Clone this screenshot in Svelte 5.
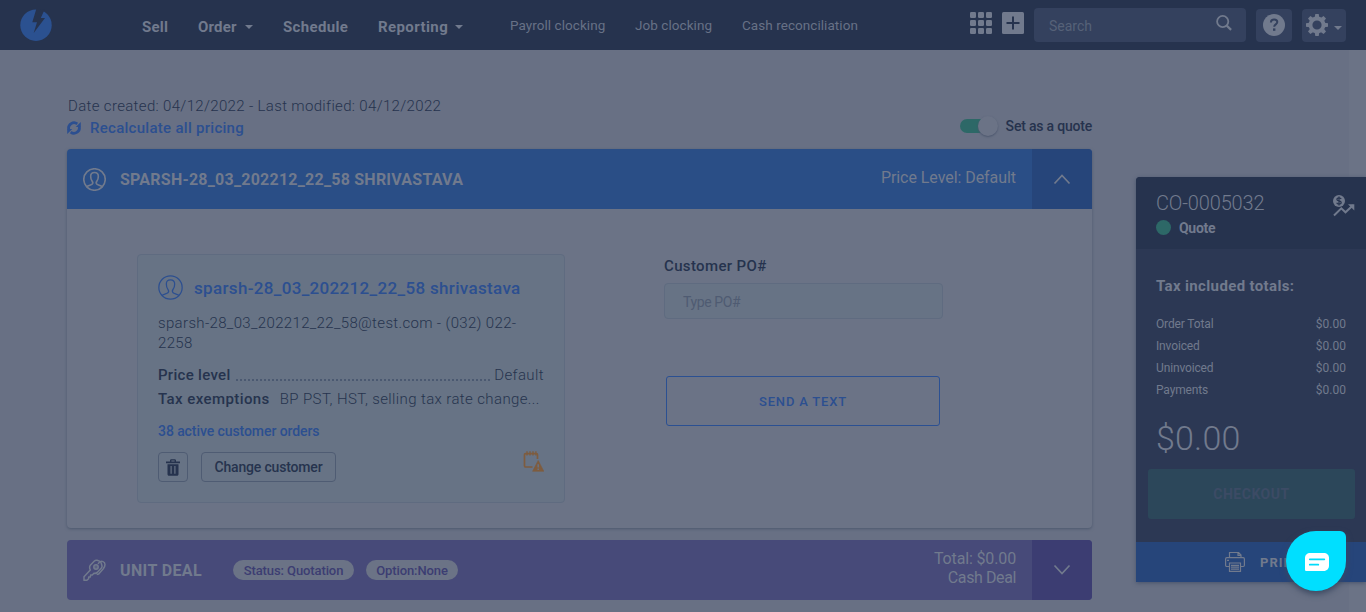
<script>
  const totals = [
    ['Order Total', '$0.00'],
    ['Invoiced', '$0.00'],
    ['Uninvoiced', '$0.00'],
    ['Payments', '$0.00'],
  ];
</script>

{#snippet person(size, stroke)}
  <svg width={size} height={size} viewBox="0 0 24 24" fill="none" stroke="currentColor" stroke-width={stroke}>
    <circle cx="12" cy="12" r="11.2" />
    <path d="M3.800 19.700c1.500-1.500 4.700-1.700 5.700-2.700.9-.9.800-2.300 0-3.300-1-1.200-1.500-2.700-1.500-5C8 6 9.300 4.700 12 4.700s4 1.300 4 4c0 2.300-.5 3.800-1.500 5-.8 1-.9 2.400 0 3.300 1 1 4.200 1.200 5.700 2.700" />
  </svg>
{/snippet}

<div class="page">
  <header>
    <svg class="logo" width="32" height="32" viewBox="20 9 32 32">
      <circle cx="36" cy="25.200" r="15.700" fill="#2b5190" />
      <path d="M36.600 8 32.300 22.300H37L33.700 33 45 18h-4.200l3.600-8z" fill="#26334e" />
    </svg>
    <nav class="primary">
      <span class="sell">Sell</span>
      <span class="order">Order <i class="caret"></i></span>
      <span class="schedule">Schedule</span>
      <span class="reporting">Reporting <i class="caret"></i></span>
    </nav>
    <nav class="secondary">
      <span class="payroll">Payroll clocking</span>
      <span class="job">Job clocking</span>
      <span class="cash">Cash reconciliation</span>
    </nav>
    <div class="tools">
      <svg class="grid" width="22" height="22" viewBox="0 0 22 22" fill="currentColor">
        {#each [0, 8, 16] as y}
          {#each [0, 8, 16] as x}
            <rect {x} {y} width="6" height="6" rx="1.200" />
          {/each}
        {/each}
      </svg>
      <svg class="plus" width="22" height="22" viewBox="0 0 22 22">
        <rect width="22" height="22" rx="1.500" fill="currentColor" />
        <path d="M11 4.500v13M4.500 11h13" stroke="#26334e" stroke-width="2" />
      </svg>
      <div class="search">
        <span>Search</span>
        <svg width="16" height="16" viewBox="0 0 16 16" fill="none" stroke="currentColor">
          <circle cx="6.700" cy="6.500" r="5.600" stroke-width="1.800" />
          <path d="m10.700 10.600 4.400 4.300" stroke-width="2.200" />
        </svg>
      </div>
      <div class="tool help">
        <svg width="22" height="22" viewBox="0 0 22 22">
          <circle cx="11" cy="11" r="11" fill="currentColor" />
          <path d="M7.900 8.500c0-2 1.300-3.100 3.200-3.100s3.200 1 3.200 2.700c0 2.300-3.100 2.300-3.100 4.700" fill="none" stroke="#34415e" stroke-width="2" />
          <rect x="10" y="14.400" width="2.400" height="2.400" fill="#34415e" />
        </svg>
      </div>
      <div class="tool gear">
        <svg width="22" height="22" viewBox="-11 -11 22 22">
          <g fill="currentColor">
            {#each [0, 45, 90, 135, 180, 225, 270, 315] as angle}
              <path d="M-2.300-7.500-1.700-11H1.700L2.300-7.500z" transform="rotate({angle})" />
            {/each}
          </g>
          <circle r="6.500" fill="none" stroke="currentColor" stroke-width="3.800" />
        </svg>
        <i class="caret"></i>
      </div>
    </div>
  </header>

  <div class="content">
    <main>
      <div class="meta">
        <div>
          <p class="dates">Date created: 04/12/2022 - Last modified: 04/12/2022</p>
          <p class="recalc">
            <svg width="14" height="14" viewBox="0 0 14 14" fill="none" stroke="currentColor" stroke-width="2.800">
              <path d="M1.700 8.200a5.400 5.400 0 0 1 8.600-5.300M12.300 5.800a5.400 5.400 0 0 1-8.600 5.300" />
              <path d="M13.800 1v5H8.800zM.2 13V8h5z" fill="currentColor" stroke="none" />
            </svg>
            <span>Recalculate all pricing</span>
          </p>
        </div>
        <div class="quote-toggle">
          <span class="switch"><b></b></span>
          <span class="toggle-label">Set as a quote</span>
        </div>
      </div>

      <section class="card">
        <div class="bar blue">
          <span class="bar-icon">{@render person(23, 1.7)}</span>
          <h2 class="customer-title">SPARSH-28_03_202212_22_58 SHRIVASTAVA</h2>
          <div class="summary level">Price Level: Default</div>
          <div class="expander">
            <svg width="18" height="12" viewBox="0 0 18 12" fill="none" stroke="currentColor" stroke-width="1.700"><path d="m1.500 10.500 7.500-8 7.500 8" /></svg>
          </div>
        </div>
        <div class="card-body">
          <div class="customer">
            <div class="name">
              {@render person(25, 1.2)}
              <span>sparsh-28_03_202212_22_58 shrivastava</span>
            </div>
            <p class="contact"><span>sparsh-28_03_202212_22_58@test.com - (032) 022-</span><br /><span>2258</span></p>
            <div class="row">
              <b class="pl">Price level</b><span class="dots"></span><span class="default">Default</span>
            </div>
            <div class="row tax">
              <b class="te">Tax exemptions</b><span class="tax-list">BP PST, HST, selling tax rate change...</span>
            </div>
            <div class="orders">38 active customer orders</div>
            <div class="actions">
              <div class="btn trash">
                <svg width="14" height="17" viewBox="0 0 14 17" fill="currentColor">
                  <path d="M4 2.500V1.800C4 .8 4.500.3 5.400.3h3.200c.9 0 1.400.5 1.400 1.500v.7h4v1.700H0V2.500zm1.400 0h3.200v-1H5.400z" />
                  <path fill-rule="evenodd" d="M1.500 5.200h11v10c0 .9-.6 1.500-1.500 1.500H3c-.9 0-1.500-.6-1.500-1.500zM4.500 7v7.800h1.200V7zm3.800 0v7.800h1.200V7z" />
                </svg>
              </div>
              <div class="btn change"><span>Change customer</span></div>
              <svg class="warn" width="21" height="21" viewBox="0 0 21 21" fill="none" stroke="currentColor">
                <path d="M9.500 16H2.700C1.900 16 1.500 15.600 1.500 14.800V3.800c0-.8.4-1.200 1.200-1.200h10.600c.8 0 1.200.4 1.200 1.200V8" stroke-width="1.700" />
                <path d="M4 .2v4.300M7 .2v4.300M10 .2v4.300M12.900.2v4.300" stroke-width="1.400" />
                <path d="M15.200 9.500 20.800 20.300H9.600z" fill="currentColor" stroke="currentColor" stroke-width=".6" stroke-linejoin="round" />
                <path d="M15.200 13.300v3.200M15.200 17.400v1.500" stroke="#677385" stroke-width="1.500" />
              </svg>
            </div>
          </div>
          <div class="po">
            <div class="po-label">Customer PO#</div>
            <div class="input"><span>Type PO#</span></div>
            <div class="send"><span>SEND A TEXT</span></div>
          </div>
        </div>
      </section>

      <section class="card unit">
        <div class="bar purple">
          <span class="bar-icon">
            <svg width="23" height="22" viewBox="0 0 23 22" fill="none" stroke="currentColor" stroke-width="1.500" stroke-linejoin="round">
              <path d="M7.300 6.300 11.400 2c.8-.8 1.700-1 2.700-.7l2.400.8c.8.300 1.400.9 1.600 1.700l.8 2.700c.3 1 .1 1.900-.7 2.700l-4 4.200c-.9.900-2 1.200-3.300.8l-1.600 1.700-1.700.1-.2 1.900-1.700.2-.1 1.700-1.700 1.500H1v-3.500l6.300-6.700c-.8-1.800-.9-3.700 0-4.800z" />
              <circle cx="13" cy="8" r="2.200" fill="currentColor" fill-opacity=".5" />
              <path d="M15 4.800c1.400-2.100 3.400-2.800 5-2.200 2.600 1 2.600 4.200.3 7.200l-4.600 5.200-2 .4" />
            </svg>
          </span>
          <h2 class="unit-title">UNIT DEAL</h2>
          <span class="pill status"><span>Status: Quotation</span></span>
          <span class="pill option"><span>Option:None</span></span>
          <div class="summary"><span class="total">Total: $0.00</span><br /><span class="deal">Cash Deal</span></div>
          <div class="expander">
            <svg width="18" height="12" viewBox="0 0 18 12" fill="none" stroke="currentColor" stroke-width="1.700"><path d="m1.500 1.500 7.500 8 7.500-8" /></svg>
          </div>
        </div>
      </section>
    </main>

    <aside>
      <div class="side-head">
        <div>
          <div class="number">CO-0005032</div>
          <div class="state"><i></i><span>Quote</span></div>
        </div>
        <svg class="profit" width="22" height="22" viewBox="0 0 22 22">
          <circle cx="6" cy="6" r="6" fill="currentColor" />
          <path d="M8.200 4.100C7.800 3.300 7 2.900 6 2.900c-1.200 0-2.100.6-2.100 1.500 0 2.200 4.300.9 4.300 3.200 0 .9-.9 1.500-2.200 1.500-1.100 0-2-.5-2.300-1.300M6 1.600v8.800" fill="none" stroke="#26334e" stroke-width="1.200" />
          <path d="m1 20.500 7.300-7.200 4.200 4 7.500-7" fill="none" stroke="currentColor" stroke-width="2" />
          <path d="M15 9.300H21.300V15.500z" fill="currentColor" />
        </svg>
      </div>
      <div class="side-body">
        <h3><span>Tax included totals:</span></h3>
        {#each totals as [label, amount]}
          <div class="line"><span class="line-label">{label}</span><span>{amount}</span></div>
        {/each}
        <div class="grand">$0.00</div>
        <div class="checkout"><span>CHECKOUT</span></div>
      </div>
      <div class="print">
        <svg width="20" height="20" viewBox="0 0 20 20" fill="none" stroke="currentColor" stroke-width="1.200">
          <path d="M4.500 5.500v-5h9L16 3v2.500M13 .6v2.800h3M4.500 14.500H1.800C1 14.500.6 14 .6 13.300V7c0-.8.4-1.300 1.200-1.300h16.400c.8 0 1.200.5 1.200 1.300v6.300c0 .8-.4 1.200-1.200 1.200h-2.700M4.500 11h11v8.400h-11zM6 13.300h8M6 15.200h8M6 17.100h8M2 8.300h2" />
        </svg>
        <span>PRINT</span>
      </div>
    </aside>
  </div>

  <div class="chat">
    <svg width="24" height="18" viewBox="0 0 24 18">
      <path d="M5.500 0h13C22 0 24 2 24 5v7.500c0 3-2 5.500-5.500 5.500H1.500C.5 18 0 17.500 0 16.500V5C0 2 2 0 5.500 0z" fill="#fff" />
      <path d="M4.800 6.300h14.500M4.800 11.700h8.500" stroke="#00dcfb" stroke-width="1.800" stroke-linecap="round" />
    </svg>
  </div>
</div>

<style>
  :global(body) { margin: 0; background: #687084; }
  .page { position: relative; width: 1366px; height: 612px; overflow: hidden; box-sizing: border-box; background: linear-gradient(90deg, #687084 1349px, #6b7386 1349px); font-family: Roboto, "Liberation Sans", sans-serif; color: #26334e; white-space: nowrap; }
  p, h2, h3 { margin: 0; }
  svg { display: block; flex: none; }

  header { height: 50px; background: #26334e; color: #717a8d; display: flex; align-items: flex-start; }
  .logo { margin: 9px 0 0 20px; }
  nav { display: flex; }
  .primary { margin-left: 90px; width: 368px; font-size: 15px; font-weight: 700; line-height: 54px; }
  .primary span { display: flex; align-items: center; }
  .sell { width: 56px; letter-spacing: .2px; }
  .order { width: 85px; letter-spacing: .2px; }
  .schedule { width: 95px; letter-spacing: .35px; }
  .reporting { letter-spacing: .4px; }
  .caret { border: 4px solid transparent; border-top-color: currentColor; border-bottom: 0; margin-left: 7px; }
  .order .caret { margin-left: 8px; }
  .secondary { font-size: 13.500px; line-height: 51px; color: #677186; letter-spacing: .06px; }
  .payroll { width: 125px; }
  .job { width: 107px; }
  .cash { width: 228px; }
  .tools { display: flex; }
  .grid { margin-top: 12px; }
  .plus { margin: 12px 10px 0; }
  .search { width: 212px; height: 34px; margin-top: 8px; border-radius: 4px; background: #34415e; display: flex; align-items: flex-start; box-sizing: border-box; padding: 0 14px 0 15px; justify-content: space-between; color: #566178; font-size: 14px; line-height: 37px; }
  .search svg { color: #717a8d; margin-top: 7px; }
  .tool { height: 33px; margin-top: 9px; border-radius: 4px; background: #34415e; display: flex; align-items: center; box-sizing: border-box; }
  .help { width: 36px; margin-left: 10px; padding-left: 7px; }
  .help svg, .gear svg { margin-top: -1px; }
  .gear { width: 44px; margin-left: 10px; padding-left: 4px; }
  .gear .caret { margin: 4px 0 0 6px; }

  .content { display: flex; padding-left: 67px; }
  main { width: 1025px; margin-right: 44px; }
  .meta { height: 99px; display: flex; justify-content: space-between; }
  .dates { margin: 45px 0 0 1px; font-size: 15px; line-height: 22px; font-weight: 300; letter-spacing: .34px; }
  .recalc { display: flex; align-items: center; color: #2c4f90; font-size: 15px; font-weight: 500; line-height: 22px; letter-spacing: .28px; }
  .recalc span { margin-left: 9px; }
  .quote-toggle { display: flex; align-items: center; height: 22px; margin-top: 65px; font-size: 14px; font-weight: 500; }
  .switch { display: flex; justify-content: flex-end; align-items: center; width: 38px; height: 14px; border-radius: 7px; background: linear-gradient(90deg, #2d6867 30px, transparent 30px); }
  .switch b { width: 20px; height: 20px; border-radius: 50%; background: #6b7386; box-shadow: 0 1px 2px #4b566d; }
  .toggle-label { margin-left: 8px; letter-spacing: -.2px; }

  .card { border-radius: 4px; background: #6b7386; box-shadow: 0 1px 3px #4c586e; height: 379px; overflow: hidden; }
  .bar { height: 60px; display: flex; align-items: center; color: #717a8d; }
  .blue { background: #2a4e86; }
  .purple { background: #474a79; }
  .bar-icon { width: 37px; margin-left: 16px; }
  h2 { font-size: 16px; font-weight: 700; line-height: 24px; padding-top: 2px; }
  .customer-title { letter-spacing: .23px; }
  .unit-title { letter-spacing: .38px; }
  .summary { margin-left: auto; margin-right: 16px; text-align: right; font-size: 16px; line-height: 19px; padding-bottom: 4px; }
  .level { letter-spacing: -.06px; }
  .total { letter-spacing: -.14px; }
  .deal { letter-spacing: -.4px; }
  .expander { width: 60px; height: 60px; display: flex; align-items: center; justify-content: center; background: #26457a; }
  .purple .expander { background: #3c3d72; }
  .card-body { display: flex; padding: 45px 0 0 70px; }
  .customer { box-sizing: border-box; width: 428px; height: 249px; border: 1px solid #5f6b80; border-radius: 4px; background: #677385; padding: 20px 20px 0; }
  .name { display: flex; align-items: center; color: #2c4f90; font-size: 17px; font-weight: 500; height: 25px; letter-spacing: .33px; }
  .name span { margin-left: 11px; }
  .contact { margin-top: 13px; font-size: 15px; line-height: 20px; font-weight: 300; letter-spacing: .34px; }
  .row { display: flex; height: 24px; line-height: 24px; align-items: center; font-size: 15px; letter-spacing: .3px; }
  .row:not(.tax) { margin-top: 10px; }
  .row b { font-weight: 500; }
  .row > span { font-weight: 300; }
  .row .default { letter-spacing: .4px; }
  .dots { flex: 1; height: 2px; margin: 9px 4px 0 5px; background: repeating-linear-gradient(90deg, #4b5971 0 2px, transparent 2px 4px); }
  .te { letter-spacing: .42px; }
  .tax-list { margin-left: 10px; letter-spacing: .38px; }
  .orders { color: #2c4f90; font-size: 14px; font-weight: 500; line-height: 20px; margin-top: 10px; letter-spacing: -.08px; }
  .actions { display: flex; margin-top: 11px; }
  .btn { height: 30px; border: 1px solid #4f5c73; border-radius: 4px; display: flex; align-items: center; justify-content: center; box-sizing: border-box; }
  .trash { width: 30px; }
  .change { width: 135px; margin-left: 13px; font-size: 14px; font-weight: 500; letter-spacing: -.18px; line-height: 30px; }
  .warn { color: #7e5c3f; margin: -1px 0 0 auto; }
  .po { margin-left: 99px; }
  .po-label { font-size: 15px; font-weight: 500; line-height: 24px; height: 29px; letter-spacing: .36px; }
  .input { box-sizing: border-box; width: 279px; height: 36px; border: 1px solid #5f6b80; border-radius: 4px; background: #677385; color: #4f5b72; font-size: 14px; line-height: 37px; padding-left: 18px; letter-spacing: -.4px; }
  .send { box-sizing: border-box; width: 274px; height: 50px; border: 1px solid #2b5092; border-radius: 3px; margin: 57px 0 0 2px; color: #2c4f90; text-align: center; font-size: 13px; font-weight: 500; line-height: 49px; letter-spacing: .8px; }
  .unit { margin-top: 12px; height: 60px; box-shadow: none; }
  .pill { height: 20px; border-radius: 10px; background: #6b7386; color: #3c3d72; font-size: 13px; font-weight: 500; line-height: 21px; text-align: center; }
  .status { width: 121px; margin-left: 31px; letter-spacing: -.1px; }
  .option { width: 92px; margin-left: 12px; letter-spacing: -.1px; }

  aside { width: 230px; height: 405px; margin-top: 127px; background: #2c3854; border-radius: 4px 0 0 0; color: #717a8d; box-shadow: 0 1px 4px #47536b; }
  .side-head { height: 72px; background: #26334e; box-sizing: border-box; padding: 14px 11px 0 20px; display: flex; justify-content: space-between; border-radius: 4px 0 0 0; }
  .number { font-size: 20px; font-weight: 300; line-height: 24px; letter-spacing: -.15px; }
  .state { display: flex; align-items: center; font-size: 14px; font-weight: 700; height: 25px; letter-spacing: -.3px; }
  .state i { width: 15px; height: 15px; border-radius: 50%; background: #2d6867; margin-right: 8px; }
  .profit { margin-top: 4px; }
  .side-body { height: 293px; box-sizing: border-box; padding: 27px 20px 0; }
  h3 { font-size: 15px; font-weight: 700; line-height: 20px; margin-bottom: 17px; letter-spacing: .36px; }
  .line { display: flex; justify-content: space-between; font-size: 12px; font-weight: 400; line-height: 22px; }
  .line-label { letter-spacing: -.14px; }
  .grand { font-size: 34px; font-weight: 300; line-height: 40px; margin-top: 17px; letter-spacing: .2px; }
  .checkout { width: 207px; height: 50px; margin: 11px 0 0 -8px; border-radius: 3px; background: #2c475a; color: #3c4b65; text-align: center; font-size: 14px; font-weight: 700; line-height: 50px; letter-spacing: .5px; }
  .print { height: 40px; display: flex; align-items: center; background: #26457a; font-size: 13px; font-weight: 700; padding-left: 89px; }
  .print span { margin-left: 15px; letter-spacing: 1px; }
  .chat { position: absolute; left: 1286px; top: 531px; width: 60px; height: 60px; border-radius: 30px 6px 30px 30px; background: #00dfff; box-shadow: 0 3px 6px #3b4860; display: flex; align-items: center; justify-content: center; box-sizing: border-box; padding: 2px 0 0 2px; }
</style>
